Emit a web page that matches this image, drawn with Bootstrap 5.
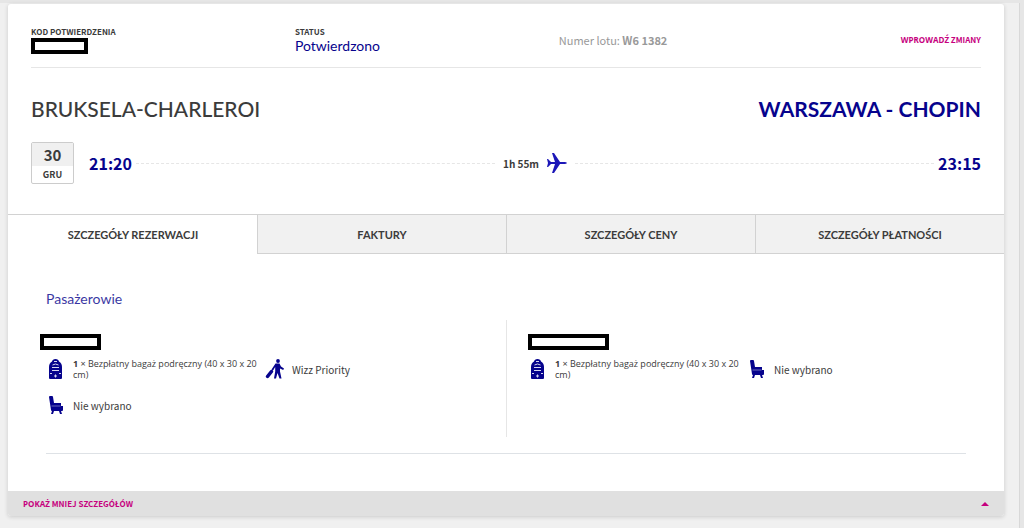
<!DOCTYPE html>
<html lang="pl">
<head>
<meta charset="utf-8">
<meta name="viewport" content="width=device-width, initial-scale=1">
<title>Rezerwacja</title>
<link href="https://cdn.jsdelivr.net/npm/bootstrap@5.3.0/dist/css/bootstrap.min.css" rel="stylesheet">
<style>
:root{--navy:#06038d;--pink:#c6007e;--ink:#3b3b3b;--rule:#e6e6e6;--edge:#d2d2d2}
body{font-family:"Noto Sans CJK SC","Noto Sans",sans-serif;font-size:10px;line-height:11px;color:var(--ink);background:#f0f0f0;min-height:100vh}
.page-shell{min-height:100vh;border-top:3px solid #e6e6e6;border-right:4px solid #e6e6e6;padding:1px 16px 12px 8px;box-shadow:inset -1px 0 #d8d8d8}
.booking{background:#fff;border-radius:3px;box-shadow:0 1px 4px rgba(0,0,0,.16)}
.display{font-family:Lato,sans-serif}
.accented{font-family:"Open Sans","Noto Sans",sans-serif}
.navy{color:var(--navy)}
.trip{padding:22px 23px 30px}
.summary{display:grid;grid-template-columns:5fr 5fr 8fr;height:42px;border-bottom:1px solid var(--rule)}
.tag{font-size:8px;line-height:12px;font-weight:700}
.status{font-size:14px;line-height:16px}
.flight-no{font-size:11px;line-height:28px;color:#999}
.action{font-size:8px;line-height:28px;font-weight:700;color:var(--pink);text-decoration:none}
.redacted{border:4px solid #000;background:#fff;height:16px}
.w-code{width:57px}.w-first{width:61px}.w-second{width:81px}
.city{font-size:21px;line-height:26px;margin:0}
.timeline{height:42px;margin-top:20px}
.date-box{width:43px;height:42px;border:1px solid #ccc;border-radius:2px;text-align:center;font-weight:700;margin-right:15px}
.date-day{font-size:15px;line-height:23px;height:23px;background:#f0f0f0}
.date-month{font-size:9px;line-height:17px}
.hour{font-size:16px;line-height:24px;font-weight:700}
.dash{border-top:1px dashed #e6e6e6}
.tabs{border-top:1px solid var(--edge)}
.tabs button{flex:1 1 0;height:39px;padding:2px 0 0;border:0;border-left:1px solid var(--edge);border-bottom:1px solid var(--edge);background:#f1f1f1;font:700 11px/16px Lato,sans-serif;color:var(--ink)}
.tabs button.active{background:#fff;border-color:transparent}
.details{padding:36px 38px 37px}
.details h2{font-size:14px;line-height:18px;margin:0 0 12px;color:var(--navy);font-weight:400;opacity:.8}
.people{display:grid;grid-template-columns:1fr 1fr;min-height:117px}
.person{padding-top:14px}
.person + .person{border-left:1px solid var(--rule);padding-left:21px}
.extras{display:grid;grid-template-columns:1fr 1fr;row-gap:14px;padding:8px 0 0;margin:0;list-style:none}
.extras .allowance{font-size:9px}
.person:first-child .extras{padding-right:22px}
.person:first-child .redacted{margin-left:-6px}
.extras li{display:flex;align-items:center;min-height:22px}
.extras svg{width:20px;height:22px;flex:none;margin-right:7px}
.foot{background:#e0e0e0;border:0;border-radius:0 0 3px 3px;height:25px;padding:0 15px;color:var(--pink);font-size:8px;font-weight:700}
</style>
</head>
<body>
<svg class="d-none" xmlns="http://www.w3.org/2000/svg">
<symbol id="bag" viewBox="0 0 20 22"><path fill="#06038d" d="M3 20V9q0-4 3-5.500Q6.500 1 9.500 1T13 3.500q3 1.500 3 5.500v11q0 1-1 1H4q-1 0-1-1z"/><path d="M8 3.500h3M6.500 7q3-2 6 0M6 9.500h7M6 12.500h7M4 15.500h2m7 0h2M8 18h3M9.500 16.500v3" stroke="#d8d8f0" fill="none"/></symbol>
<symbol id="seat" viewBox="0 0 20 22"><path fill="#06038d" d="M3 3q0-1 1-1h2q1 0 1 1l1 6h7v3h2v4q0 1-1 1h-1l1 3h-2l-1-3H8l-1 3H5l1-3q-1 0-1-1z"/><path d="M5.500 12h9" stroke="#9c9bd2" stroke-width=".7"/></symbol>
<symbol id="walker" viewBox="0 0 20 22"><circle cx="13" cy="3" r="1.900" fill="#06038d"/><path fill="#06038d" d="M10.500 5.500h4l1.500 3 3 2-.8 1.500-3.200-1.500v3l1.500 7h-2L12.500 15 11 20.500H9l1.200-7V9L8 12.500l-1.500-1z"/><path d="M6.500 13.500l-4 5" stroke="#06038d" stroke-width="3.500" stroke-linecap="round"/><path d="M6 14l2-3" stroke="#06038d"/></symbol>
</svg>
<div class="page-shell">
<main class="booking">
<section class="trip">
<div class="summary">
<div><div class="tag">KOD POTWIERDZENIA</div><div class="redacted w-code"></div></div>
<div><div class="tag">STATUS</div><div class="status display navy">Potwierdzono</div></div>
<div class="d-flex justify-content-between"><span class="flight-no">Numer lotu: <b>W6 1382</b></span><a class="action" href="#"><span class="accented">WPROWADŹ</span> ZMIANY</a></div>
</div>
<div class="d-flex justify-content-between pt-4 mt-1">
<h1 class="city display">BRUKSELA-CHARLEROI</h1>
<h1 class="city display navy fw-bold">WARSZAWA - CHOPIN</h1>
</div>
<div class="timeline d-flex align-items-center">
<div class="date-box"><div class="date-day">30</div><div class="date-month">GRU</div></div>
<span class="hour navy">21:20</span>
<span class="dash flex-fill ms-1 me-2"></span>
<b>1h 55m</b>
<svg class="mx-2" width="20" height="20" viewBox="0 0 20 20"><path fill="#1c17b8" d="M0 6h1l3 3h4L5 0h2l6 9h5q2 .5 2 1t-2 1h-5l-6 9H5l3-9H4l-3 3H0l1-4z"/></svg>
<span class="dash flex-fill me-1"></span>
<span class="hour navy">23:15</span>
</div>
</section>
<div class="tabs d-flex" role="tablist">
<button class="active" role="tab" aria-selected="true">SZCZEGÓŁY REZERWACJI</button>
<button role="tab">FAKTURY</button>
<button role="tab">SZCZEGÓŁY CENY</button>
<button role="tab">SZCZEGÓŁY PŁATNOŚCI</button>
</div>
<section class="details">
<h2 class="display">Pasażerowie</h2>
<div class="people">
<div class="person"><div class="redacted w-first"></div>
<ul class="extras">
<li><svg><use href="#bag"/></svg><span class="allowance accented"><b>1</b> × Bezpłatny bagaż podręczny (40 x 30 x 20 cm)</span></li>
<li><svg><use href="#walker"/></svg><span>Wizz Priority</span></li>
<li><svg><use href="#seat"/></svg><span>Nie wybrano</span></li>
</ul></div>
<div class="person"><div class="redacted w-second"></div>
<ul class="extras">
<li><svg><use href="#bag"/></svg><span class="allowance accented"><b>1</b> × Bezpłatny bagaż podręczny (40 x 30 x 20 cm)</span></li>
<li><svg><use href="#seat"/></svg><span>Nie wybrano</span></li>
</ul></div>
</div>
<div class="border-bottom pt-3"></div>
</section>
<button class="foot d-flex w-100 align-items-center justify-content-between"><span><span class="accented">POKAŻ</span> MNIEJ SZCZEGÓŁÓW</span><svg width="8" height="4" viewBox="0 0 8 4"><path fill="#c6007e" d="M0 4l4-4 4 4z"/></svg></button>
</main>
</div>
<script src="https://cdn.jsdelivr.net/npm/bootstrap@5.3.0/dist/js/bootstrap.bundle.min.js"></script>
</body>
</html>
